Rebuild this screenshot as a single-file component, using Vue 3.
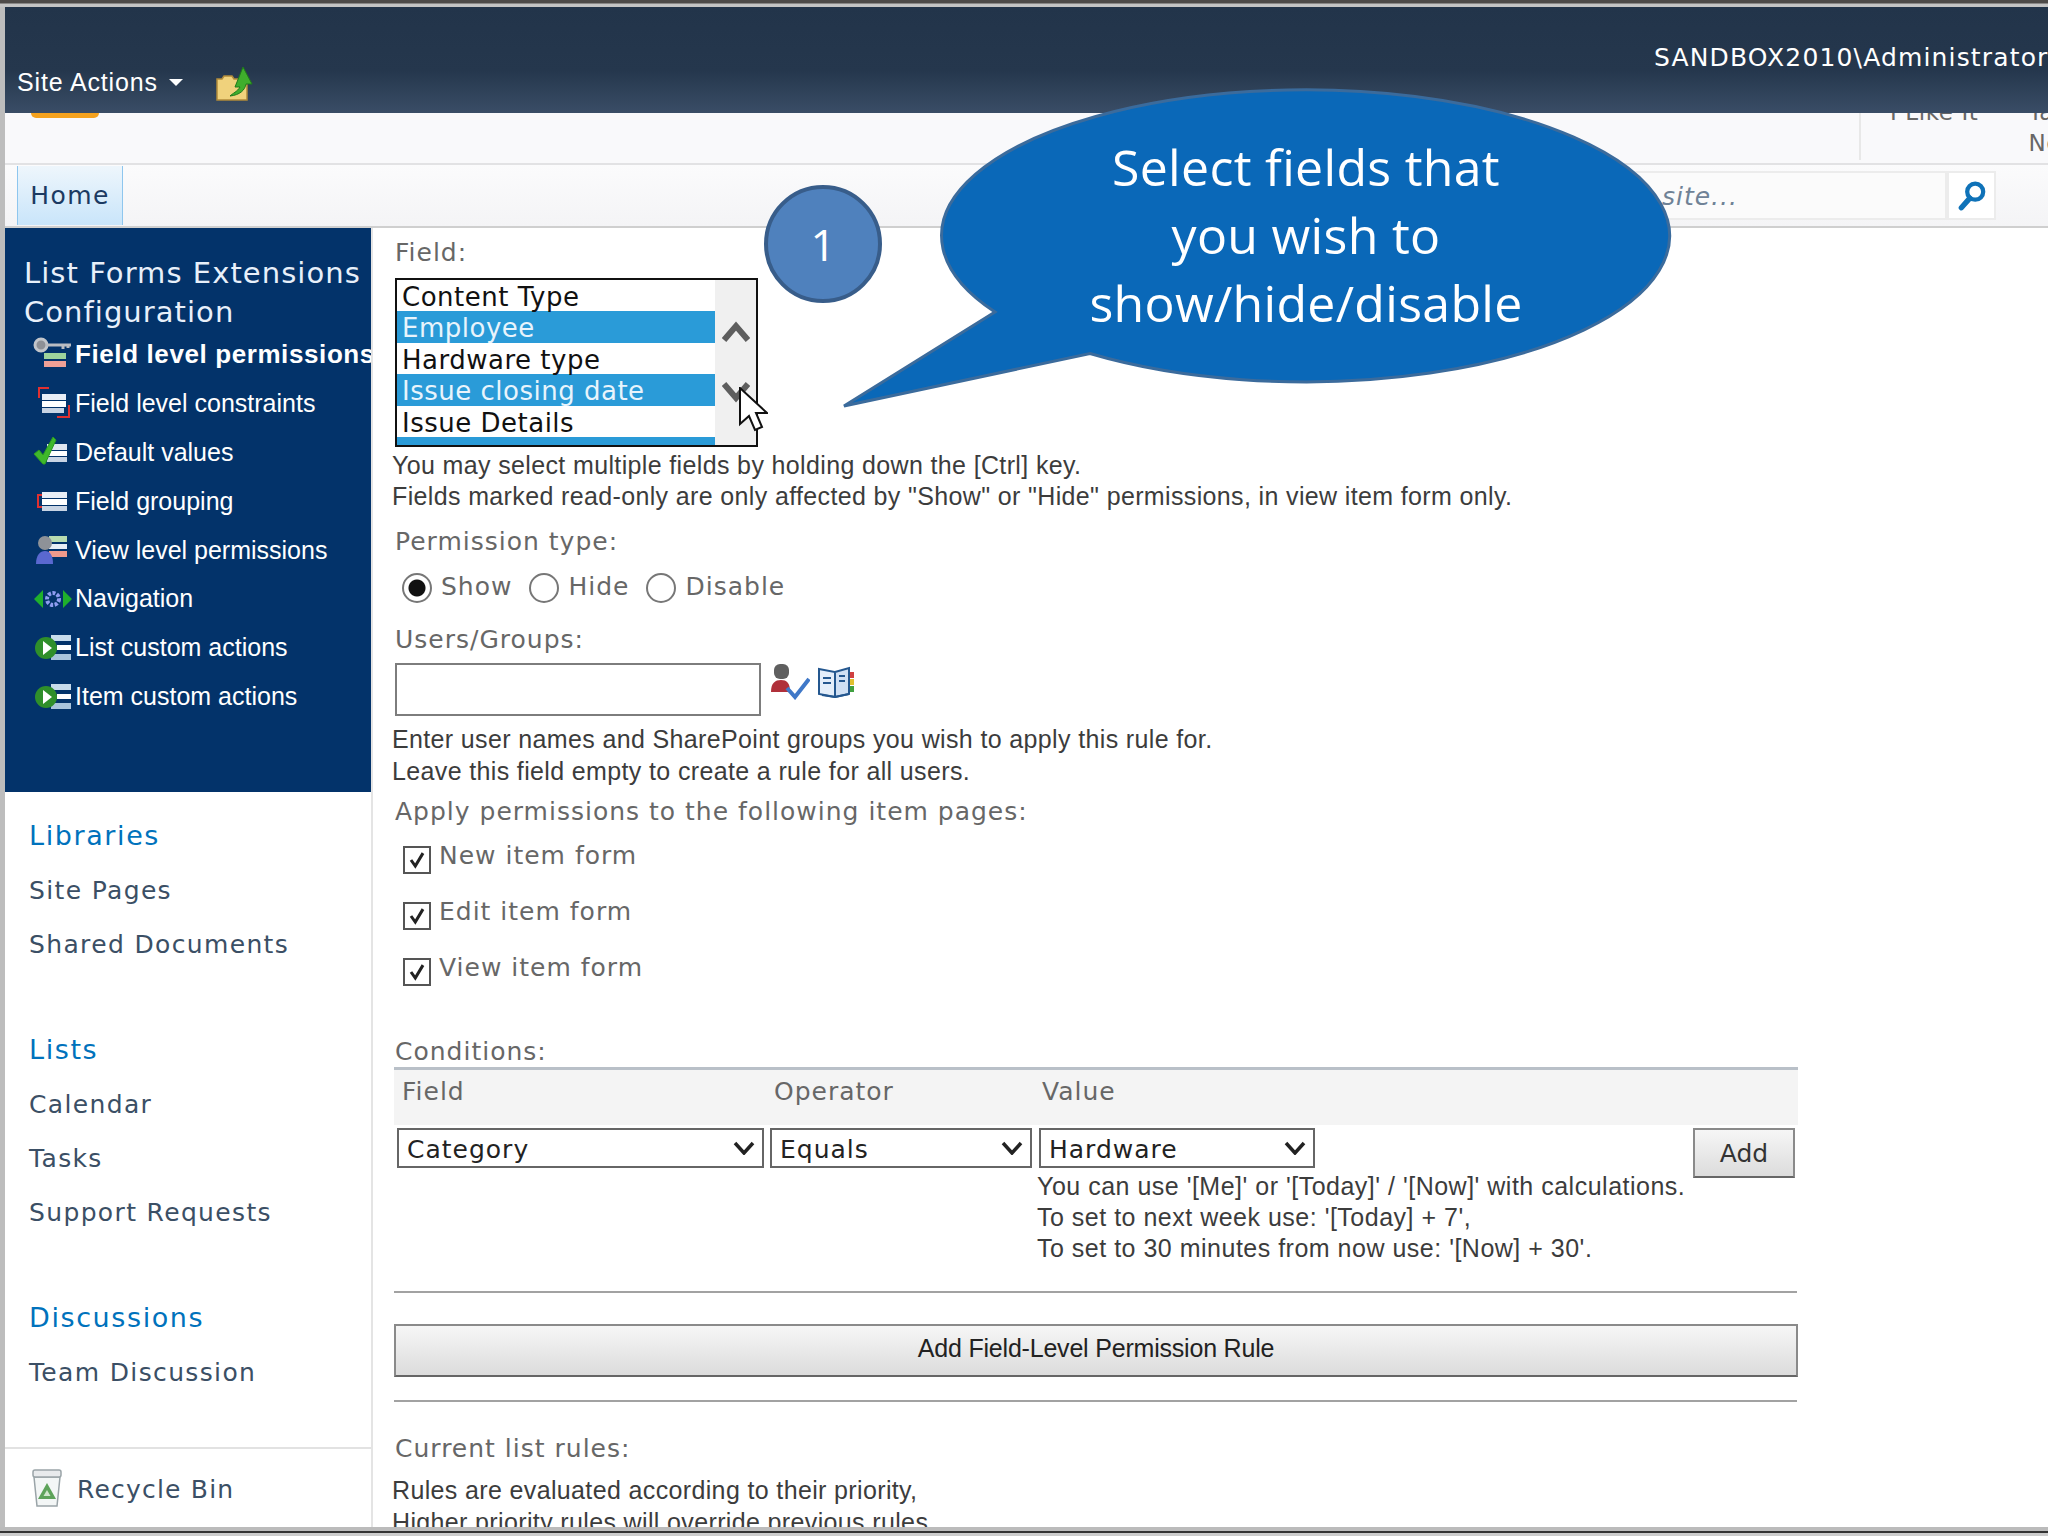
<script setup>
const navItems = [
  { icon: 'key', label: 'Field level permissions', bold: true },
  { icon: 'constraint', label: 'Field level constraints' },
  { icon: 'default', label: 'Default values' },
  { icon: 'group', label: 'Field grouping' },
  { icon: 'view', label: 'View level permissions' },
  { icon: 'nav', label: 'Navigation' },
  { icon: 'action', label: 'List custom actions' },
  { icon: 'action', label: 'Item custom actions' },
]

const quickLaunch = [
  { title: 'Libraries', links: ['Site Pages', 'Shared Documents'] },
  { title: 'Lists', links: ['Calendar', 'Tasks', 'Support Requests'] },
  { title: 'Discussions', links: ['Team Discussion'] },
]

const fields = [
  { name: 'Content Type' },
  { name: 'Employee', selected: true },
  { name: 'Hardware type' },
  { name: 'Issue closing date', selected: true },
  { name: 'Issue Details' },
]

const permissionTypes = [
  { name: 'Show', checked: true },
  { name: 'Hide' },
  { name: 'Disable' },
]

const itemPages = ['New item form', 'Edit item form', 'View item form']
</script>

<template>
  <div class="page">
    <div class="frame-top"></div>
    <div class="shell">
      <header class="topbar">
        <div class="site-actions">
          <span>Site Actions</span>
          <i class="caret"></i>
          <svg class="folder-icon" viewBox="0 0 38 36">
            <path d="M2 13h5l2-3h8l2 3h13v21H2z" fill="#f0d27c" stroke="#b08a3a" stroke-width="1.5" />
            <path d="M15 30c3-3 7-4 10-9h-5L28 1l9 17h-6c-1 6-6 11-16 12z" fill="#3fae2c" stroke="#1f7a1a" />
          </svg>
        </div>
        <div class="user">SANDBOX2010\Administrator</div>
      </header>

      <div class="title-row">
        <div class="logo-edge"></div>
        <div class="social">
          <div class="like">I Like It</div>
          <div class="tags">Tags &amp;<br />Notes</div>
        </div>
      </div>

      <div class="nav-row">
        <div class="home-tab">Home</div>
        <div class="search">
          <div class="search-box">Search this site...</div>
          <div class="search-btn">
            <svg viewBox="0 0 28 30" width="30" height="32">
              <circle cx="17" cy="11" r="7.5" fill="none" stroke="#0f72b8" stroke-width="4" />
              <path d="M12 17L4 26" stroke="#0f72b8" stroke-width="5" stroke-linecap="round" />
            </svg>
          </div>
        </div>
      </div>

      <div class="body">
        <aside class="side">
          <div class="config-panel">
            <div class="config-title">List Forms Extensions Configuration</div>
            <div
              v-for="item in navItems"
              :key="item.label"
              class="config-item"
              :class="{ bold: item.bold }"
            >
              <svg class="config-icon" viewBox="0 0 40 36">
                <g v-if="item.icon === 'key'">
                  <circle cx="8" cy="9" r="6" fill="#8d9096" stroke="#c2c5ca" stroke-width="3" />
                  <path d="M13 9h25M30 9v4M35 9v3" stroke="#b9bcc2" stroke-width="3" />
                  <rect x="11" y="17" width="22" height="6" fill="#9ed49c" />
                  <rect x="11" y="25" width="22" height="6" fill="#f0a096" />
                </g>
                <g v-else-if="item.icon === 'constraint'">
                  <path d="M6 13V3h10M36 20v12H24" fill="none" stroke="#e03030" stroke-width="2" />
                  <rect x="9" y="9" width="24" height="6" fill="#e8eef6" />
                  <rect x="9" y="16" width="24" height="6" fill="#fff" />
                  <rect x="9" y="23" width="22" height="5" fill="#c8d4e4" />
                </g>
                <g v-else-if="item.icon === 'default'">
                  <rect x="14" y="10" width="20" height="6" fill="#dfe6f0" />
                  <rect x="14" y="17" width="20" height="5" fill="#fff" />
                  <rect x="14" y="23" width="20" height="5" fill="#c8d4e4" />
                  <path d="M1 20l5-4 4 5L20 3l3 3-11 24h-2z" fill="#3fb82c" stroke="#2a9a20" />
                </g>
                <g v-else-if="item.icon === 'group'">
                  <path d="M12 12H5v12h7" fill="none" stroke="#e03030" stroke-width="2" />
                  <rect x="9" y="9" width="25" height="6" fill="#e8eef6" />
                  <rect x="9" y="16" width="25" height="6" fill="#fff" />
                  <rect x="9" y="23" width="25" height="5" fill="#c8d4e4" />
                </g>
                <g v-else-if="item.icon === 'view'">
                  <rect x="16" y="4" width="18" height="6" fill="#b8dcb0" />
                  <rect x="16" y="12" width="18" height="5" fill="#e8eef6" />
                  <rect x="16" y="19" width="18" height="6" fill="#f09a8c" />
                  <circle cx="12" cy="11" r="7" fill="#8e9298" />
                  <path d="M3 32c0-9 4-13 9-13s8 4 8 13z" fill="#5a68d0" />
                </g>
                <g v-else-if="item.icon === 'nav'">
                  <path d="M10 9v18L1 18zM30 9v18l9-9z" fill="#1fb02c" />
                  <circle cx="20" cy="18" r="6" fill="none" stroke="#8f9cf0" stroke-width="4" stroke-dasharray="3 1.5" />
                </g>
                <g v-else>
                  <rect x="18" y="5" width="20" height="6" fill="#c8dcec" />
                  <rect x="24" y="15" width="14" height="5" fill="#fff" />
                  <rect x="18" y="24" width="20" height="6" fill="#a8c4dc" />
                  <circle cx="13" cy="18" r="11" fill="#2f8f2a" />
                  <path d="M10 11l9 7-9 7z" fill="#fff" />
                </g>
              </svg>
              <span class="config-label">{{ item.label }}</span>
            </div>
          </div>

          <nav class="quick-launch">
            <div v-for="group in quickLaunch" :key="group.title" class="ql-group">
              <div class="ql-title">{{ group.title }}</div>
              <div v-for="link in group.links" :key="link" class="ql-link">{{ link }}</div>
            </div>
          </nav>

          <div class="recycle">
            <svg viewBox="0 0 32 40" width="32" height="40">
              <path d="M3 9h26l-3 29H6z" fill="#f3f6f6" stroke="#9aa4a8" stroke-width="1.5" />
              <rect x="2" y="2" width="28" height="7" rx="2" fill="#e8eaec" stroke="#9aa4a8" stroke-width="1.5" />
              <path d="M16 15l9 16H7z" fill="#5da35a" />
              <path d="M16 22l3.5 6h-7z" fill="#cfe6cc" />
            </svg>
            <span>Recycle Bin</span>
          </div>
        </aside>

        <main class="main">
          <div class="label field-label">Field:</div>
          <div class="listbox">
            <div class="list-rows">
              <div
                v-for="field in fields"
                :key="field.name"
                class="list-row"
                :class="{ selected: field.selected }"
              >{{ field.name }}</div>
              <div class="list-row selected"></div>
            </div>
            <div class="list-scroll">
              <svg viewBox="0 0 28 24" width="28" height="24"><path d="M2 20L14 6l12 14" fill="none" stroke="#5e5e5e" stroke-width="6" /></svg>
              <svg viewBox="0 0 28 24" width="28" height="24"><path d="M2 4l12 14L26 4" fill="none" stroke="#5e5e5e" stroke-width="6" /></svg>
            </div>
          </div>
          <p class="hint field-hint">
            You may select multiple fields by holding down the [Ctrl] key.<br />
            Fields marked read-only are only affected by "Show" or "Hide" permissions, in view item form only.
          </p>

          <div class="label permission-label">Permission type:</div>
          <div class="radios">
            <div v-for="type in permissionTypes" :key="type.name" class="radio-item">
              <span class="radio" :class="{ checked: type.checked }"></span>
              <span class="label">{{ type.name }}</span>
            </div>
          </div>

          <div class="label users-label">Users/Groups:</div>
          <div class="users-row">
            <div class="users-input"></div>
            <svg class="check-names" viewBox="0 0 40 36" width="40" height="36">
              <rect x="4" y="0" width="15" height="15" rx="6" fill="#5f5f5f" />
              <path d="M1 28c0-9 4-12 10-12s9 3 9 12z" fill="#b0303a" />
              <path d="M17 24l8 9L39 15" fill="none" stroke="#3f78c8" stroke-width="4" />
            </svg>
            <svg class="address-book" viewBox="0 0 38 32" width="38" height="32">
              <path d="M2 3l16 3v25L2 28z" fill="#e4eefa" stroke="#24578f" stroke-width="2" />
              <path d="M18 6l14-4v26l-14 3z" fill="#d0e0f4" stroke="#24578f" stroke-width="2" />
              <path d="M5 29l13 2 14-3" fill="none" stroke="#24578f" stroke-width="2" />
              <path d="M6 12h8M6 17h8M22 10h6M22 15h6" stroke="#24578f" stroke-width="2" />
              <rect x="33" y="6" width="4" height="6" fill="#d04040" />
              <rect x="33" y="13" width="4" height="6" fill="#e0c030" />
              <rect x="33" y="20" width="4" height="6" fill="#40a040" />
            </svg>
          </div>
          <p class="hint users-hint">
            Enter user names and SharePoint groups you wish to apply this rule for.<br />
            Leave this field empty to create a rule for all users.
          </p>

          <div class="label apply-label">Apply permissions to the following item pages:</div>
          <div v-for="page in itemPages" :key="page" class="check-row">
            <span class="checkbox">
              <svg viewBox="0 0 28 28" width="28" height="28"><path d="M7 14l5 7 9-15" fill="none" stroke="#222" stroke-width="3.5" /></svg>
            </span>
            <span class="label">{{ page }}</span>
          </div>

          <div class="label conditions-label">Conditions:</div>
          <div class="cond-head">
            <span class="head-field">Field</span>
            <span class="head-op">Operator</span>
            <span class="head-value">Value</span>
          </div>
          <div class="cond-row">
            <div class="fake-select sel-field">
              <span>Category</span>
              <svg viewBox="0 0 22 14" width="22" height="14"><path d="M2 2l9 10 9-10" fill="none" stroke="#222" stroke-width="3.5" /></svg>
            </div>
            <div class="fake-select sel-op">
              <span>Equals</span>
              <svg viewBox="0 0 22 14" width="22" height="14"><path d="M2 2l9 10 9-10" fill="none" stroke="#222" stroke-width="3.5" /></svg>
            </div>
            <div class="value-cell">
              <div class="fake-select sel-value">
                <span>Hardware</span>
                <svg viewBox="0 0 22 14" width="22" height="14"><path d="M2 2l9 10 9-10" fill="none" stroke="#222" stroke-width="3.5" /></svg>
              </div>
              <p class="hint value-hint">
                You can use '[Me]' or '[Today]' / '[Now]' with calculations.<br />
                To set to next week use: '[Today] + 7',<br />
                To set to 30 minutes from now use: '[Now] + 30'.
              </p>
            </div>
            <button class="btn add-btn">Add</button>
          </div>

          <div class="rule rule-one"></div>
          <button class="btn submit-btn">Add Field-Level Permission Rule</button>
          <div class="rule rule-two"></div>

          <div class="label current-label">Current list rules:</div>
          <p class="hint rules-hint">
            Rules are evaluated according to their priority,<br />
            Higher priority rules will override previous rules.
          </p>
        </main>
      </div>
    </div>
    <div class="frame-bottom"></div>

    <div class="step-badge">1</div>

    <div class="callout">
      <svg viewBox="0 0 840 330" width="840" height="330">
        <path
          d="M153 224A364 146 0 1 1 248 265.5L2 318z"
          fill="#0a68b8"
          stroke="#3b6b9c"
          stroke-width="3"
        />
      </svg>
      <div class="callout-text">Select fields that<br />you wish to<br />show/hide/disable</div>
    </div>

    <svg class="cursor" viewBox="0 0 30 46" width="30" height="46">
      <path d="M2 1v36l9-8 6 14 7-3-6-14h11z" fill="#fff" stroke="#111" stroke-width="2" />
    </svg>
  </div>
</template>

<style>
html, body {
  margin: 0;
  background: #fff;
}
</style>

<style scoped>
.page {
  position: relative;
  width: 2048px;
  height: 1536px;
  overflow: hidden;
  display: flex;
  flex-direction: column;
  background: #bdbdbd;
  font-family: "DejaVu Sans", sans-serif;
}

.frame-top {
  height: 7px;
  flex: none;
  background: linear-gradient(#4d4a48 0, #4d4a48 3px, #c4c4c4 4px, #c4c4c4 100%);
}

.frame-bottom {
  height: 9px;
  flex: none;
  background: linear-gradient(#bbb 0, #bbb 4px, #333 4px, #333 6px, #ccc 6px);
}

.shell {
  flex: 1;
  min-height: 0;
  margin-left: 5px;
  display: flex;
  flex-direction: column;
  background: #fff;
  overflow: hidden;
}

.topbar {
  height: 106px;
  flex: none;
  display: flex;
  background: linear-gradient(#22344a 0, #25374d 60%, #3a4d66 100%);
  color: #fff;
  overflow: hidden;
}

.site-actions {
  display: flex;
  align-items: center;
  height: 38px;
  margin-top: 56px;
  margin-left: 12px;
  font-family: "Liberation Sans", sans-serif;
  font-size: 25px;
  letter-spacing: 0.85px;
}

.caret {
  width: 0;
  height: 0;
  margin-left: 11px;
  border-left: 7px solid transparent;
  border-right: 7px solid transparent;
  border-top: 7px solid #fff;
}

.folder-icon {
  width: 38px;
  height: 36px;
  margin-left: 32px;
  margin-top: 4px;
}

.user {
  margin-left: auto;
  width: 394px;
  flex: none;
  margin-top: 33px;
  font-size: 25px;
  line-height: 36px;
  letter-spacing: 1.15px;
  white-space: nowrap;
}

.title-row {
  height: 50px;
  flex: none;
  display: flex;
  justify-content: space-between;
  background: #f9f9fb;
  border-bottom: 2px solid #e2e2e4;
  overflow: hidden;
}

.logo-edge {
  width: 68px;
  height: 5px;
  margin-left: 26px;
  background: #f5a21e;
  border-radius: 0 0 8px 8px;
}

.social {
  display: flex;
  width: 187px;
  flex: none;
  height: 47px;
  border-left: 2px solid #e8e8e8;
  font-size: 23px;
  line-height: 31px;
  letter-spacing: 0.6px;
  white-space: nowrap;
  color: #676767;
}

.like {
  margin-left: 29px;
  margin-top: -16px;
  flex: none;
}

.tags {
  margin-left: 50px;
  margin-top: -16px;
  flex: none;
}

.nav-row {
  height: 61px;
  flex: none;
  display: flex;
  justify-content: space-between;
  background: linear-gradient(#fbfbfc, #f4f4f6);
  border-bottom: 2px solid #cfcfcf;
}

.home-tab {
  width: 104px;
  margin: 1px 0 1px 12px;
  display: flex;
  align-items: center;
  justify-content: center;
  background: linear-gradient(#eef6fc, #c9e5fa);
  border-left: 1px solid #8ec6ee;
  border-right: 1px solid #8ec6ee;
  font-size: 25px;
  letter-spacing: 1.4px;
  color: #1b3a62;
}

.search {
  display: flex;
  height: 49px;
  margin-top: 6px;
  margin-right: 52px;
}

.search-box {
  width: 447px;
  padding-right: 210px;
  box-sizing: border-box;
  border: 2px solid #ececec;
  background: #fbfbfb;
  color: #6f8296;
  font-size: 25px;
  font-style: italic;
  line-height: 48px;
  letter-spacing: 1px;
  text-align: right;
  white-space: nowrap;
}

.search-btn {
  width: 49px;
  display: flex;
  align-items: center;
  justify-content: center;
  border: 2px solid #ececec;
  box-sizing: border-box;
  background: #fff;
}

.body {
  flex: 1;
  min-height: 0;
  display: flex;
}

.side {
  width: 366px;
  flex: none;
  display: flex;
  flex-direction: column;
  border-right: 2px solid #e4e4e4;
}

.config-panel {
  height: 564px;
  flex: none;
  box-sizing: border-box;
  padding-top: 26px;
  background: #03336a;
  overflow: hidden;
  color: #fff;
}

.config-title {
  padding: 0 0 0 19px;
  margin-bottom: -2px;
  font-size: 29px;
  line-height: 39px;
  letter-spacing: 1.05px;
  color: #e8f0fa;
}

.config-item {
  display: flex;
  align-items: center;
  height: 48.9px;
  padding-left: 28px;
  font-family: "Liberation Sans", sans-serif;
  font-size: 25px;
  white-space: nowrap;
}

.config-item.bold {
  font-size: 26px;
  font-weight: 700;
  letter-spacing: 0.6px;
}

.config-icon {
  width: 40px;
  height: 36px;
  flex: none;
  margin-right: 2px;
}

.quick-launch {
  padding: 17px 0 0 24px;
}

.ql-group + .ql-group {
  margin-top: 51px;
}

.ql-title {
  height: 55px;
  font-size: 27px;
  line-height: 54px;
  letter-spacing: 1.6px;
  color: #0072bc;
}

.ql-link {
  font-size: 25px;
  line-height: 54px;
  letter-spacing: 1.35px;
  color: #3b4f65;
}

.recycle {
  margin-top: auto;
  height: 78px;
  display: flex;
  align-items: center;
  gap: 14px;
  padding-left: 26px;
  border-top: 2px solid #e2e2e2;
  font-size: 25px;
  letter-spacing: 1.2px;
  color: #3b4f65;
}

.recycle span {
  margin-top: 3px;
}

.main {
  flex: 1;
  min-width: 0;
  padding-left: 22px;
  overflow: hidden;
}

.label {
  font-size: 25px;
  line-height: 40px;
  letter-spacing: 1px;
  color: #676767;
}

.field-label {
  margin-top: 5px;
}

.hint {
  margin: 0;
  font-family: "Liberation Sans", sans-serif;
  font-size: 25px;
  line-height: 31.2px;
  letter-spacing: 0.36px;
  color: #3c3c3c;
  white-space: nowrap;
}

.listbox {
  width: 363px;
  height: 169px;
  margin-top: 5px;
  display: flex;
  box-sizing: border-box;
  border: 2px solid #111;
  background: #fff;
  overflow: hidden;
}

.list-rows {
  flex: 1;
}

.list-row {
  height: 31.4px;
  padding-left: 5px;
  font-size: 26px;
  line-height: 35px;
  letter-spacing: 0.5px;
  color: #111;
  white-space: nowrap;
}

.list-row.selected {
  background: #2a9bd8;
  color: #e8f4fc;
}

.list-scroll {
  width: 41px;
  display: flex;
  flex-direction: column;
  align-items: center;
  gap: 36px;
  padding-top: 40px;
  background: #f0f0f0;
  box-sizing: border-box;
}

.field-hint {
  margin-top: 3px;
  margin-left: -3px;
}

.permission-label {
  margin-top: 10px;
}

.radios {
  display: flex;
  height: 40px;
  margin-top: 6px;
  padding-left: 7px;
}

.radio-item {
  display: flex;
  align-items: center;
  gap: 9px;
  margin-right: 17px;
}

.radio-item .label {
  margin-top: -3px;
}

.radio {
  width: 30px;
  height: 30px;
  box-sizing: border-box;
  border: 2px solid #777;
  border-radius: 50%;
  background: #fff;
}

.radio.checked {
  background: radial-gradient(circle, #111 0, #111 8px, #fff 9px);
}

.users-label {
  margin-top: 12px;
}

.users-row {
  display: flex;
  margin-top: 3px;
}

.users-input {
  width: 366px;
  height: 53px;
  box-sizing: border-box;
  border: 2px solid #7d7d7d;
}

.check-names {
  margin: 1px 0 0 9px;
}

.address-book {
  margin: 3px 0 0 7px;
}

.users-hint {
  margin-top: 8px;
  margin-left: -3px;
}

.apply-label {
  margin-top: 5px;
}

.check-row {
  display: flex;
  align-items: center;
  gap: 8px;
  height: 56px;
  margin-left: 8px;
}

.check-row .label {
  margin-top: -7px;
}

.checkbox {
  width: 28px;
  height: 28px;
  flex: none;
  box-sizing: border-box;
  border: 2px solid #555;
  display: flex;
  align-items: center;
  justify-content: center;
}

.conditions-label {
  margin-top: 37px;
  line-height: 30px;
}

.cond-head {
  width: 1404px;
  height: 58px;
  box-sizing: border-box;
  margin-left: -1px;
  display: grid;
  grid-template-columns: 376px 268px 1fr;
  background: #f4f4f4;
  border-top: 3px solid #b9c0c8;
  font-size: 25px;
  line-height: 44px;
  letter-spacing: 1px;
  color: #676767;
}

.head-field {
  padding-left: 8px;
}

.head-op,
.head-value {
  padding-left: 4px;
}

.cond-row {
  width: 1404px;
  margin-left: -1px;
  padding-top: 3px;
  display: grid;
  grid-template-columns: 376px 268px 1fr 105px;
  align-items: start;
}

.fake-select {
  height: 40px;
  box-sizing: border-box;
  display: flex;
  align-items: center;
  justify-content: space-between;
  padding: 0 7px 0 8px;
  border: 2px solid #666;
  font-size: 25px;
  letter-spacing: 1px;
  color: #222;
}

.fake-select span {
  margin-top: 4px;
}

.sel-field {
  width: 367px;
  margin-left: 3px;
}

.sel-op {
  width: 262px;
}

.sel-value {
  width: 276px;
  margin-left: 1px;
}

.value-hint {
  margin-top: 3px;
  margin-left: -1px;
  letter-spacing: 0.5px;
}

.btn {
  background: linear-gradient(#f6f6f6, #dcdcdc);
  border: 2px solid #8a8a8a;
  border-bottom-color: #666;
  color: #333;
  font-size: 25px;
  padding: 0;
}

.add-btn {
  width: 102px;
  height: 50px;
  padding-top: 2px;
  font-family: "DejaVu Sans", sans-serif;
}

.rule {
  width: 1403px;
  height: 2px;
  margin-left: -1px;
  background: #a2a2a2;
}

.rule-one {
  margin-top: 27px;
}

.submit-btn {
  display: block;
  width: 1404px;
  height: 53px;
  margin-top: 31px;
  margin-left: -1px;
  padding-bottom: 4px;
  font-family: "Liberation Sans", sans-serif;
  letter-spacing: -0.2px;
  color: #222;
}

.rule-two {
  margin-top: 23px;
}

.current-label {
  margin-top: 27px;
}

.rules-hint {
  margin-top: 6px;
  margin-left: -3px;
  line-height: 31.5px;
}

.step-badge {
  position: absolute;
  left: 764px;
  top: 185px;
  width: 118px;
  height: 118px;
  box-sizing: border-box;
  border: 4px solid #385d8a;
  border-radius: 50%;
  background: #4f81bd;
  color: #fff;
  display: flex;
  align-items: center;
  justify-content: center;
  font-family: "Open Sans", sans-serif;
  font-size: 44px;
}

.callout {
  position: absolute;
  left: 842px;
  top: 88px;
  width: 840px;
  height: 330px;
}

.callout-text {
  position: absolute;
  left: 100px;
  top: 45px;
  width: 728px;
  text-align: center;
  font-family: "Open Sans", sans-serif;
  font-size: 50px;
  line-height: 68px;
  letter-spacing: 0.3px;
  color: #fff;
}

.cursor {
  position: absolute;
  left: 738px;
  top: 387px;
}
</style>
